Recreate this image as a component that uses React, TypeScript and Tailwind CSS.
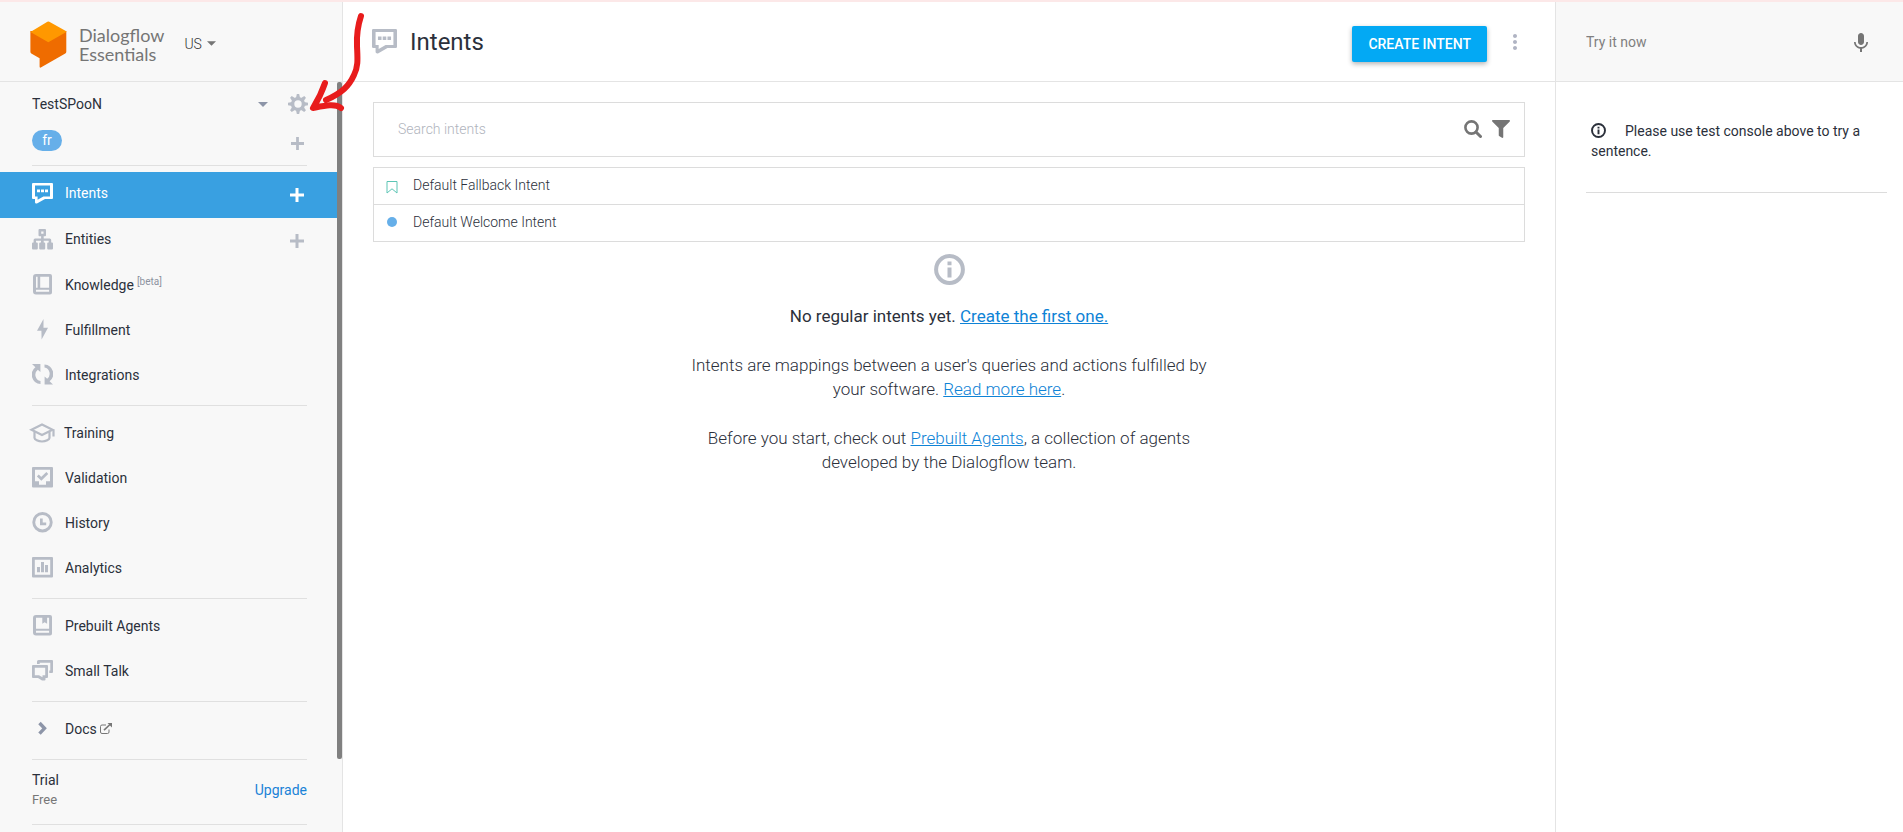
import { ReactElement, ReactNode, useState } from 'react'
import { FaFilter } from 'react-icons/fa'
import { MdMic, MdMoreVert } from 'react-icons/md'

interface IconProps {
    className?: string
}

interface NavItem {
    label: string
    icon: ReactElement
    beta?: boolean
    canAdd?: boolean
    external?: boolean
}

function Icon({ children, className }: { children: ReactNode; className?: string }): ReactElement {
    return (
        <svg viewBox="0 0 21 21" className={className ?? 'size-[21px]'} fill="currentColor" fillRule="evenodd" aria-hidden="true">
            {children}
        </svg>
    )
}

function IntentsIcon({ className }: IconProps): ReactElement {
    return (
        <Icon className={className}>
            <path d="M1 0h19a1 1 0 0 1 1 1v14a1 1 0 0 1-1 1h-7L5.4 20.3C4.4 21 3 20.4 3 19.2V16H1a1 1 0 0 1-1-1V1a1 1 0 0 1 1-1zM3 2.6v10.8h2.6v3.4l5.8-3.4H18V2.6zM5 6.4h3v2.8H5zM9 6.4h3v2.8H9zM13 6.4h3v2.8h-3z" />
        </Icon>
    )
}

function EntitiesIcon(): ReactElement {
    return (
        <Icon>
            <path d="M7.500 0h5.500a1 1 0 0 1 1 1v5.200a1 1 0 0 1-1 1h-1.300v2.300h6a1.500 1.500 0 0 1 1.500 1.500V13.500h.8a1 1 0 0 1 1 1v5a1 1 0 0 1-1 1h-3.800a1 1 0 0 1-1-1v-5a1 1 0 0 1 1-1h.5v-1.700h-5v1.700h.5a1 1 0 0 1 1 1v5a1 1 0 0 1-1 1h-4a1 1 0 0 1-1-1v-5a1 1 0 0 1 1-1h.8v-1.700H4v1.700h.8a1 1 0 0 1 1 1v5a1 1 0 0 1-1 1H1a1 1 0 0 1-1-1v-5a1 1 0 0 1 1-1h.6V11a1.500 1.500 0 0 1 1.500-1.500h6V7.200H7.500a1 1 0 0 1-1-1V1a1 1 0 0 1 1-1zM9.200 2.500v2.200h2.300V2.500z" />
        </Icon>
    )
}

function KnowledgeIcon(): ReactElement {
    return (
        <Icon>
            <path d="M4 0h14a2 2 0 0 1 2 2v16.500a2 2 0 0 1-2 2H4a3 3 0 0 1-3-3V3a3 3 0 0 1 3-3zM4 2.700v11h1.600v-11zM8.200 2.700v11h8.900v-11zM4 15.800v2h13.100v-2z" />
        </Icon>
    )
}

function FulfillmentIcon(): ReactElement {
    return (
        <Icon>
            <path d="M11.500 0 5 11.800h4.400L9.600 20.500 16 8.800h-4.500z" />
        </Icon>
    )
}

function IntegrationsIcon(): ReactElement {
    return (
        <Icon>
            <path d="M0 0h8.400v8L5.800 5.700a6.400 6.400 0 0 0 2.700 11.300v3.100A9.400 9.400 0 0 1 3.400 3.300zM21 20.500h-8.400v-8l2.600 2.300a6.400 6.400 0 0 0-2.700-11.300V.4a9.400 9.400 0 0 1 5.100 16.800z" />
        </Icon>
    )
}

function TrainingIcon(): ReactElement {
    return (
        <svg viewBox="0 0 26 20" className="-mx-[3px] h-5 w-[26px] shrink-0" fill="none" stroke="currentColor" strokeWidth="2.2" aria-hidden="true">
            <path d="M2.500 6.800 13 1.500l10.500 5.300L13 12z" />
            <path d="M5.500 9v6c0 1.600 3.600 3.500 7.500 3.500s7.500-1.900 7.500-3.500V9" />
            <path d="M24.500 6.800v6.700" />
        </svg>
    )
}

function ValidationIcon(): ReactElement {
    return (
        <Icon>
            <path d="M1 0h19a1 1 0 0 1 1 1v18.500a1 1 0 0 1-1 1H1a1 1 0 0 1-1-1V1a1 1 0 0 1 1-1zM3 2.700v11.500h4v3.500h7v-3.500h4V2.700z" />
            <path d="m5.800 8.600 3.500 3.200 6-5.800" fill="none" stroke="currentColor" strokeWidth="2.700" />
        </Icon>
    )
}

function HistoryIcon(): ReactElement {
    return (
        <Icon>
            <path d="M10.500 0a10.200 10.200 0 1 1 0 20.400 10.200 10.200 0 0 1 0-20.400zm0 2.900a7.300 7.300 0 1 0 0 14.600 7.300 7.300 0 0 0 0-14.600z" />
            <path d="M8 6.500h2.700v4h3.500v2.700H8z" />
        </Icon>
    )
}

function AnalyticsIcon(): ReactElement {
    return (
        <Icon>
            <path d="M1 0h19a1 1 0 0 1 1 1v18.500a1 1 0 0 1-1 1H1a1 1 0 0 1-1-1V1a1 1 0 0 1 1-1zM2.800 2.800v15h15.400v-15zM5 10h3v5.300H5zM9 5h3v10.300H9zM13 8h3v7.300h-3z" />
        </Icon>
    )
}

function PrebuiltIcon(): ReactElement {
    return (
        <Icon>
            <path d="M4 0h14a2 2 0 0 1 2 2v16.500a2 2 0 0 1-2 2H4a3 3 0 0 1-3-3V3a3 3 0 0 1 3-3zM4 2.700v11h13.100v-11h-2V8.800l-2.500-1.600-2.300 1.600V2.700zM4 15.800v2h13.100v-2z" />
        </Icon>
    )
}

function SmallTalkIcon(): ReactElement {
    return (
        <Icon>
            <path d="M6.500 0H20a1 1 0 0 1 1 1v11a1 1 0 0 1-1 1h-2.700v-2.600h1V2.700H7.700V4H5V1.500A1.500 1.500 0 0 1 6.500 0z" />
            <path d="M1 5h14a1 1 0 0 1 1 1v11a1 1 0 0 1-1 1h-1.500v1.500a1 1 0 0 1-1 1H10L6 18H1a1 1 0 0 1-1-1V6a1 1 0 0 1 1-1zM2.800 7.700v7.600H7l3.500 2V15.300h2.700V7.700z" />
        </Icon>
    )
}

function DocsIcon(): ReactElement {
    return (
        <Icon className="size-[21px] text-[#8d95a8]">
            <path d="m7.500 5 5 5.300-5 5.300" fill="none" stroke="currentColor" strokeWidth="3.400" />
        </Icon>
    )
}

function ExternalIcon(): ReactElement {
    return (
        <svg viewBox="0 0 12 11" className="h-[11px] w-3 text-[#777777]" fill="none" stroke="currentColor" aria-hidden="true">
            <path d="M6 2H2A1.500 1.500 0 0 0 .5 3.500V9A1.500 1.500 0 0 0 2 10.500h5.500A1.500 1.500 0 0 0 9 9V6.500" />
            <path d="M4 7.200 10 1.500" strokeWidth="1.600" />
            <path d="M7.500 0H12v4.500z" fill="currentColor" stroke="none" />
        </svg>
    )
}

function PlusIcon({ className }: IconProps): ReactElement {
    return (
        <svg viewBox="0 0 14 14" className={className} fill="currentColor" aria-hidden="true">
            <path d="M5.500 0h3v5.500H14v3H8.500V14h-3V8.500H0v-3h5.500z" />
        </svg>
    )
}

function GearIcon(): ReactElement {
    return (
        <svg viewBox="0 0 20 20" className="size-5" fill="none" stroke="currentColor" aria-hidden="true">
            <circle cx="10" cy="10" r="5.400" strokeWidth="3.400" />
            {[0, 45, 90, 135, 180, 225, 270, 315].map((angle) => (
                <path key={angle} d="M8 4 8.800 0h2.400l.8 4z" fill="currentColor" stroke="none" transform={`rotate(${angle} 10 10)`} />
            ))}
        </svg>
    )
}

function InfoIcon({ className }: IconProps): ReactElement {
    return (
        <svg viewBox="0 0 31 31" className={className} fill="none" stroke="currentColor" aria-hidden="true">
            <circle cx="15.500" cy="15.500" r="13.400" strokeWidth="4" />
            <path d="M13.500 7.500h4v3.800h-4zM13.500 13.500h4v10h-4z" fill="currentColor" stroke="none" />
        </svg>
    )
}

function SearchIcon(): ReactElement {
    return (
        <svg viewBox="0 0 18 18" className="size-[18px]" fill="none" stroke="currentColor" aria-hidden="true">
            <circle cx="7.500" cy="7.500" r="6.100" strokeWidth="2.600" />
            <path d="m12 12 4.500 4.500" strokeWidth="3" strokeLinecap="round" />
        </svg>
    )
}

function Caret({ className }: IconProps): ReactElement {
    return (
        <svg viewBox="0 0 10 5" className={className} fill="currentColor" aria-hidden="true">
            <path d="M0 0h10L5 5z" />
        </svg>
    )
}

function Logo(): ReactElement {
    return (
        <svg viewBox="0 0 37 47" className="h-[47px] w-[37px]" aria-hidden="true">
            <path d="M.4 10v20.800c0 .7.3 1.300.9 1.600l8.300 4.800v8.600c0 .7.700 1.100 1.200.8l24.500-14.200c.6-.3 1-.9 1-1.600V10z" fill="#ef6c00" />
            <path d="M.4 11 17.400.8a1.800 1.800 0 0 1 1.900 0L36.300 10.300v.7l-18 10.200z" fill="#ff9800" />
        </svg>
    )
}

const BUILD_ITEMS: NavItem[] = [
    { label: 'Intents', icon: <IntentsIcon />, canAdd: true },
    { label: 'Entities', icon: <EntitiesIcon />, canAdd: true },
    { label: 'Knowledge', icon: <KnowledgeIcon />, beta: true },
    { label: 'Fulfillment', icon: <FulfillmentIcon /> },
    { label: 'Integrations', icon: <IntegrationsIcon /> },
]

const MONITOR_ITEMS: NavItem[] = [
    { label: 'Training', icon: <TrainingIcon /> },
    { label: 'Validation', icon: <ValidationIcon /> },
    { label: 'History', icon: <HistoryIcon /> },
    { label: 'Analytics', icon: <AnalyticsIcon /> },
]

const LIBRARY_ITEMS: NavItem[] = [
    { label: 'Prebuilt Agents', icon: <PrebuiltIcon /> },
    { label: 'Small Talk', icon: <SmallTalkIcon /> },
]

const DOCS_ITEMS: NavItem[] = [{ label: 'Docs', icon: <DocsIcon />, external: true }]

function NavGroup({ items, active, onSelect }: { items: NavItem[]; active: string; onSelect: (label: string) => void }): ReactElement {
    return (
        <ul>
            {items.map((item) => {
                const isActive = item.label === active

                return (
                    <li
                        key={item.label}
                        className={`flex items-center justify-between pr-[33px] pb-1 pl-8 ${item.canAdd ? 'h-[46px]' : 'h-[45px]'} ${
                            isActive ? 'bg-[#39a0e1] text-white' : 'text-[#b7bcc6]'
                        }`}
                    >
                        <a href="#" onClick={() => onSelect(item.label)} className="flex items-center">
                            {item.icon}
                            <span className={`ml-3 ${isActive ? 'text-white' : 'text-[#2b303b]'}`}>{item.label}</span>
                            {item.beta && <span className="ml-[3px] pb-1.5 text-[10px] leading-4 text-[#8d93a0]">[beta]</span>}
                            {item.external && (
                                <span className="ml-[3px]">
                                    <ExternalIcon />
                                </span>
                            )}
                        </a>
                        {item.canAdd && (
                            <button aria-label={`Add ${item.label}`} className="pt-1">
                                <PlusIcon className="size-[14px]" />
                            </button>
                        )}
                    </li>
                )
            })}
        </ul>
    )
}

function Divider(): ReactElement {
    return <hr className="my-1.5 mr-[30px] ml-8 border-[#e0e0e0]" />
}

function Sidebar(): ReactElement {
    const [active, setActive] = useState<string>('Intents')

    return (
        <aside className="flex w-[343px] shrink-0 flex-col border-r border-[#e4e4e4] bg-[#f8f8f8]">
            <div className="flex h-20 shrink-0 items-center border-b border-[#e4e4e4] pl-[30px]">
                <div className="flex items-center pt-1.5">
                    <Logo />
                    <div className="ml-3 font-[Lato] text-[18px] leading-[19px] text-[#757575]">
                        Dialogflow
                        <br />
                        Essentials
                    </div>
                </div>
                <div className="relative ml-5 flex items-center pt-1">
                    <select aria-label="Region" className="w-8 appearance-none bg-transparent font-light text-[#333333]">
                        <option>US</option>
                    </select>
                    <Caret className="pointer-events-none absolute right-0 h-[5px] w-[9px] text-[#757575]" />
                </div>
            </div>

            <div className="flex min-h-0 flex-1">
                <nav className="min-w-0 flex-1 overflow-hidden">
                    <div className="flex items-center pt-3 pr-[29px] pl-8">
                        <div className="relative flex flex-1 items-center">
                            <select aria-label="Agent" className="w-full appearance-none bg-transparent text-[#2b303b]">
                                <option>TestSPooN</option>
                            </select>
                            <Caret className="pointer-events-none absolute right-0 h-[5px] w-[10px] text-[#8d95a8]" />
                        </div>
                        <button aria-label="Settings" className="ml-5 text-[#b7bcc6]">
                            <GearIcon />
                        </button>
                    </div>
                    <div className="flex items-center justify-between pt-4 pr-[33px] pb-[14px] pl-8">
                        <span className="w-[30px] rounded-full bg-[#66afe9] pb-px text-center text-white">fr</span>
                        <button aria-label="Add language" className="pt-1.5 text-[#b7bcc6]">
                            <PlusIcon className="size-[13px]" />
                        </button>
                    </div>
                    <hr className="mr-[30px] mb-1.5 ml-8 border-[#e0e0e0]" />

                    <NavGroup items={BUILD_ITEMS} active={active} onSelect={setActive} />
                    <Divider />
                    <NavGroup items={MONITOR_ITEMS} active={active} onSelect={setActive} />
                    <Divider />
                    <NavGroup items={LIBRARY_ITEMS} active={active} onSelect={setActive} />
                    <Divider />
                    <NavGroup items={DOCS_ITEMS} active={active} onSelect={setActive} />
                    <Divider />

                    <div className="flex items-center justify-between pt-1 pr-[30px] pb-2 pl-8">
                        <div className="text-[#2b303b]">
                            Trial
                            <div className="text-[13px] text-[#777777]">Free</div>
                        </div>
                        <a href="#" className="text-[#1a82d7]">
                            Upgrade
                        </a>
                    </div>
                    <Divider />
                </nav>
                <div className="w-[5px] shrink-0 pb-[73px]">
                    <div className="h-full rounded-xs bg-[#808080]" />
                </div>
            </div>
        </aside>
    )
}

function IntentList(): ReactElement {
    return (
        <ul className="mt-[10px] divide-y divide-[#dcdcdc] border border-[#dcdcdc] font-light">
            <li className="flex items-center px-3 pt-[7px] pb-[9px]">
                <svg viewBox="0 0 12 13" className="mt-1 mr-[15px] h-[13px] w-3" fill="none" stroke="#5cc5b5" aria-hidden="true">
                    <path d="M1 .5h10v11.500L6 7.800 1 12z" />
                </svg>
                <a href="#">Default Fallback Intent</a>
            </li>
            <li className="flex items-center px-3 pt-[7px] pb-[9px]">
                <span className="mr-4 ml-px size-[10px] rounded-full bg-[#66afe9]" />
                <a href="#">Default Welcome Intent</a>
            </li>
        </ul>
    )
}

function EmptyState(): ReactElement {
    return (
        <div className="mx-auto flex max-w-[540px] flex-col items-center text-center text-[17px] leading-6 font-light">
            <InfoIcon className="mt-3 mb-[19px] size-[31px] text-[#b7bcc6]" />
            <p className="mb-[25px] font-normal">
                No regular intents yet.{' '}
                <a href="#" className="text-[#0f83d6] underline">
                    Create the first one.
                </a>
            </p>
            <p className="mb-[25px]">
                Intents are mappings between a user's queries and actions fulfilled by your software.{' '}
                <a href="#" className="text-[#0f83d6] underline">
                    Read more here
                </a>
                .
            </p>
            <p>
                Before you start, check out{' '}
                <a href="#" className="text-[#0f83d6] underline">
                    Prebuilt Agents
                </a>
                , a collection of agents developed by the Dialogflow team.
            </p>
        </div>
    )
}

function IntentsPage(): ReactElement {
    const [query, setQuery] = useState<string>('')

    return (
        <main className="min-w-0 flex-1">
            <header className="flex h-20 items-center border-b border-[#e4e4e4] pr-7 pl-[29px]">
                <IntentsIcon className="size-[25px] text-[#b7bcc6]" />
                <h1 className="ml-[13px] text-2xl">Intents</h1>
                <button className="mt-1 ml-auto h-9 rounded-xs bg-[#03a9f4] px-4 font-medium text-white shadow-[0_2px_5px_rgba(0,0,0,0.3)]">
                    CREATE INTENT
                </button>
                <button aria-label="More" className="ml-4 text-[#b0b4c3]">
                    <MdMoreVert className="size-6" />
                </button>
            </header>

            <div className="px-[30px] pt-5">
                <div className="flex h-[55px] items-center border border-[#dcdcdc] pr-[14px] pb-0.5 pl-6 text-[#757575]">
                    <input
                        type="text"
                        aria-label="Search intents"
                        placeholder="Search intents"
                        value={query}
                        onChange={(e) => setQuery(e.target.value)}
                        className="min-w-0 flex-1 font-light outline-none placeholder:text-[#b0b4bd]"
                    />
                    <button aria-label="Search">
                        <SearchIcon />
                    </button>
                    <button aria-label="Filter" className="ml-[10px]">
                        <FaFilter className="size-[18px]" />
                    </button>
                </div>
                <IntentList />
                <EmptyState />
            </div>
        </main>
    )
}

function TestConsole(): ReactElement {
    const [sentence, setSentence] = useState<string>('')

    return (
        <section className="w-[348px] shrink-0 border-l border-[#e4e4e4]">
            <div className="flex h-20 items-center border-b border-[#e4e4e4] bg-[#f8f8f8] px-[30px]">
                <input
                    type="text"
                    aria-label="Try it now"
                    placeholder="Try it now"
                    value={sentence}
                    onChange={(e) => setSentence(e.target.value)}
                    className="min-w-0 flex-1 outline-none placeholder:text-[#808080]"
                />
                <button aria-label="Speak" className="pt-0.5 text-[#757575]">
                    <MdMic className="size-6" />
                </button>
            </div>
            <div className="mr-4 ml-[30px] border-b border-[#dcdcdc] px-[5px] pt-[39px] pb-[31px]">
                <InfoIcon className="mr-[19px] -mt-1 inline size-[15px]" />
                Please use test console above to try a sentence.
            </div>
        </section>
    )
}

// Hand-drawn arrow pointing at the agent settings
function SettingsArrow(): ReactElement {
    return (
        <svg
            viewBox="0 0 60 102"
            className="pointer-events-none absolute top-[9px] left-[308px] h-[102px] w-[60px]"
            fill="none"
            stroke="#e81c1c"
            strokeWidth="6"
            strokeLinecap="round"
            strokeLinejoin="round"
            aria-hidden="true"
        >
            <path d="M53 5C50 14 48.500 24 49 35C49.500 47 50.500 55 46 64C41 75 34 82 18 89" />
            <path d="M17 72C14 81 10 89 5 97C15 95 27 92 33 97" />
        </svg>
    )
}

export default function App(): ReactElement {
    return (
        <div className="relative flex h-screen overflow-hidden border-t-2 border-[#fce8e8] bg-white font-[Roboto,sans-serif] text-[14px] leading-5 text-[#2b303b]">
            <Sidebar />
            <IntentsPage />
            <TestConsole />
            <SettingsArrow />
        </div>
    )
}
